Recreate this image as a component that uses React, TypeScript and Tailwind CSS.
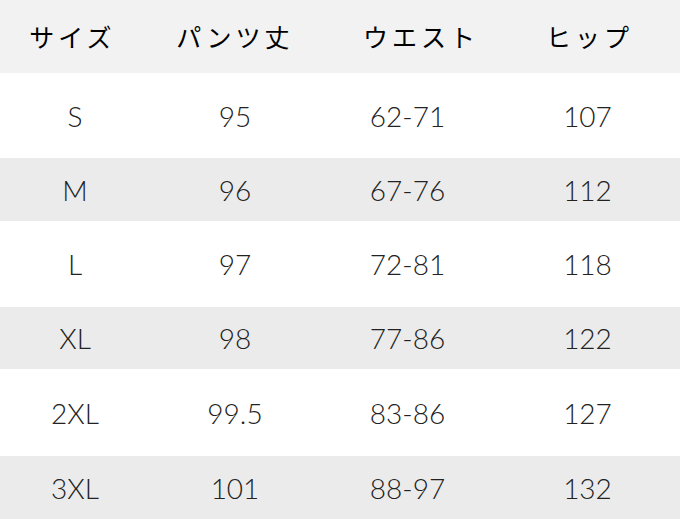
import React from "react";

const rows: { h: string; gray: boolean; c: string[] }[] = [
  { h: "h-[85px]", gray: false, c: ["S", "95", "62-71", "107"] },
  { h: "h-[63px]", gray: true, c: ["M", "96", "67-76", "112"] },
  { h: "h-[86px]", gray: false, c: ["L", "97", "72-81", "118"] },
  { h: "h-[62px]", gray: true, c: ["XL", "98", "77-86", "122"] },
  { h: "h-[87px]", gray: false, c: ["2XL", "99.5", "83-86", "127"] },
  { h: "h-[63px]", gray: true, c: ["3XL", "101", "88-97", "132"] },
];

const cols = ["w-[150px]", "w-[170px]", "w-[175px]", "flex-1"];

export default function App() {
  return (
    <div className="w-[680px] h-[519px] bg-white flex flex-col overflow-hidden">
      <div
        className="h-[73px] bg-[#f2f2f2] flex items-center text-[25px] text-black font-normal tracking-[4px]"
        style={{ fontFamily: '"Noto Sans CJK JP", sans-serif' }}
      >
        <div className="w-[150px] text-center pr-[5px]">サイズ</div>
        <div className="w-[170px] text-center">パンツ丈</div>
        <div className="w-[175px] text-center pl-[27px]">ウエスト</div>
        <div className="flex-1 text-center pl-[4px]">ヒップ</div>
      </div>
      {rows.map((r, i) => (
        <div
          key={i}
          className={`${r.h} flex items-center text-[28px] text-[#222] font-light ${r.gray ? "bg-[#ebebeb]" : "bg-white"}`}
          style={{ fontFamily: "Lato, sans-serif" }}
        >
          {r.c.map((t, j) => (
            <div key={j} className={`${cols[j]} text-center`}>
              {t}
            </div>
          ))}
        </div>
      ))}
    </div>
  );
}
